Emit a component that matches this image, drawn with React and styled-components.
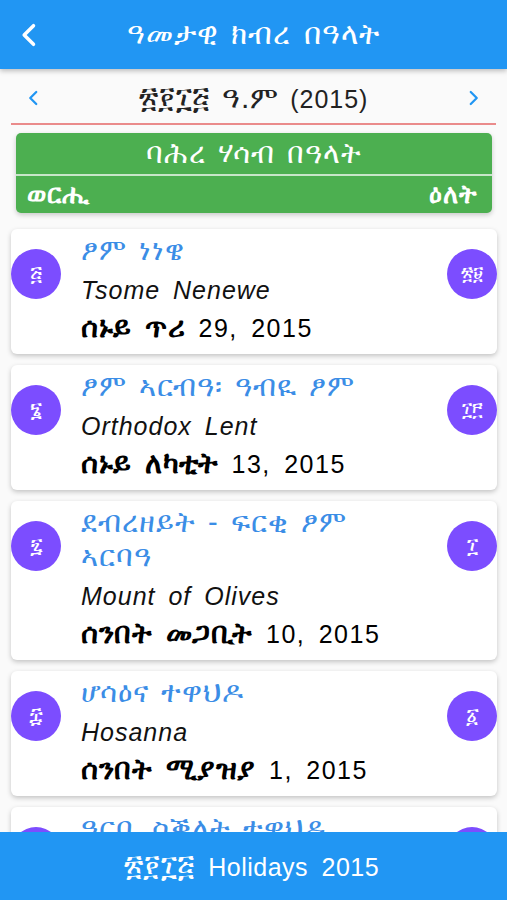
import styled, { createGlobalStyle } from "styled-components";

const GlobalStyle = createGlobalStyle`
  html, body {
    margin: 0;
    padding: 0;
    background: #fafafa;
    font-family: "Liberation Sans", "Noto Sans", "DejaVu Sans", sans-serif;
  }
`;

const Page = styled.div`
  height: 900px;
  display: flex;
  flex-direction: column;
  overflow: hidden;
  background: #fafafa;
`;

const Header = styled.header`
  flex: 0 0 69px;
  background: #2196f3;
  display: flex;
  align-items: center;
  position: relative;
  z-index: 2;
  box-shadow: 0 2px 5px rgba(0, 0, 0, 0.25);
`;

const BackButton = styled.button`
  border: none;
  background: none;
  padding: 0 0 0 16px;
  width: 60px;
  height: 100%;
  display: flex;
  align-items: center;
`;

const Title = styled.h1`
  flex: 1;
  margin: 0 60px 0 0;
  text-align: center;
  color: #fff;
  font-size: 30px;
  font-weight: normal;
  letter-spacing: 1px;
  word-spacing: 3px;
`;

const YearRow = styled.div`
  display: flex;
  align-items: center;
  justify-content: space-between;
  height: 50px;
  margin: 4px 11px 0;
  padding: 0 14px;
  border-bottom: 2px solid #ea8b8b;
`;

const Arrow = styled.span`
  display: flex;
  align-items: center;
`;

const YearText = styled.span`
  font-size: 25px;
  color: #222;
  letter-spacing: 1px;
  word-spacing: 4px;
`;

/* Ethiopic glyphs come out small in the fallback font, so they get their own size */
const Geez = styled.span`
  font-size: ${(p) => p.$size || 30}px;
  letter-spacing: 0.5px;
  line-height: 1;
`;

const Body = styled.div`
  flex: 1;
  overflow: hidden;
  padding: 8px 10px 0 11px;
`;

const GreenCard = styled.div`
  margin: 0 5px 16px;
  background: #4caf50;
  border-radius: 5px;
  box-shadow: 0 2px 5px rgba(0, 0, 0, 0.2);
  color: #fff;
`;

const GreenTitle = styled.div`
  height: 41px;
  display: flex;
  align-items: center;
  justify-content: center;
  font-size: 29px;
  letter-spacing: 1px;
  word-spacing: 3px;
  border-bottom: 2px solid #c8e6c9;
`;

const GreenRow = styled.div`
  height: 37px;
  display: flex;
  align-items: center;
  justify-content: space-between;
  padding: 0 14px 0 11px;
  font-size: 26px;
  font-weight: bold;
  letter-spacing: 1px;
`;

const List = styled.div`
  display: flex;
  flex-direction: column;
  gap: 11px;
`;

const Card = styled.div`
  background: #fff;
  border-radius: 6px;
  box-shadow: 0 2px 5px rgba(0, 0, 0, 0.22);
  display: grid;
  grid-template-columns: 50px 1fr 50px;
  column-gap: 20px;
  padding: 4px 0 7px;
`;

const Circle = styled.div`
  width: 50px;
  height: 50px;
  margin-top: 16px;
  border-radius: 50%;
  background: #7c4dff;
  color: #fff;
  display: flex;
  align-items: center;
  justify-content: center;
  font-size: ${(p) => (p.$small ? 19 : 21)}px;
  align-self: start;
`;

const Info = styled.div`
  display: flex;
  flex-direction: column;
  min-width: 0;
`;

const EventName = styled.div`
  color: #3b8de6;
  font-size: 29px;
  line-height: 34px;
  letter-spacing: 1px;
  word-spacing: 3px;
  margin-bottom: 4px;
  padding-right: 10px;
`;

const English = styled.div`
  font-style: italic;
  font-size: 25px;
  line-height: 38px;
  color: #111;
  letter-spacing: 1px;
  word-spacing: 5px;
`;

const DateLine = styled.div`
  height: 38px;
  font-size: 25px;
  line-height: 38px;
  color: #000;
  letter-spacing: 1.5px;
  word-spacing: 5px;
`;

const DateWord = styled.b`
  font-weight: bold;
  font-size: 29px;
  line-height: 1;
  letter-spacing: 0.5px;
`;

const Footer = styled.footer`
  flex: 0 0 68px;
  background: #2196f3;
  color: #fff;
  display: flex;
  align-items: center;
  justify-content: center;
  position: relative;
  z-index: 2;
`;

const FooterText = styled.span`
  font-size: 25px;
  letter-spacing: 0.5px;
  word-spacing: 6px;
  margin-left: -4px;
`;

const Chevron = ({ dir, size, color, width }) => (
  <svg width={size} height={size} viewBox="0 0 24 24" fill="none">
    <path
      d={dir === "left" ? "M15 4 L7 12 L15 20" : "M9 4 L17 12 L9 20"}
      stroke={color}
      strokeWidth={width}
      strokeLinecap="round"
      strokeLinejoin="round"
    />
  </svg>
);

const holidays = [
  {
    month: "፭",
    day: "፳፱",
    name: "ፆም ነነዌ",
    english: "Tsome Nenewe",
    date: "ሰኑይ ጥሪ",
    num: "29, 2015",
  },
  {
    month: "፮",
    day: "፲፫",
    name: "ፆም ኣርብዓ፡ ዓብዪ ፆም",
    english: "Orthodox Lent",
    date: "ሰኑይ ለካቲት",
    num: "13, 2015",
  },
  {
    month: "፯",
    day: "፲",
    name: "ደብረዘይት - ፍርቂ ፆም ኣርባዓ",
    english: "Mount of Olives",
    date: "ሰንበት መጋቢት",
    num: "10, 2015",
  },
  {
    month: "፰",
    day: "፩",
    name: "ሆሳዕና ተዋህዶ",
    english: "Hosanna",
    date: "ሰንበት ሚያዝያ",
    num: "1, 2015",
  },
  {
    month: "፰",
    day: "፮",
    name: "ዓርቢ ስቕለት ተዋህዶ",
    english: "Good Friday",
    date: "ዓርቢ ሚያዝያ",
    num: "6, 2015",
  },
];

export default function App() {
  return (
    <>
      <GlobalStyle />
      <Page>
        <Header>
          <BackButton aria-label="back">
            <Chevron dir="left" size={28} color="#fff" width={3} />
          </BackButton>
          <Title>ዓመታዊ ክብረ በዓላት</Title>
        </Header>
        <YearRow>
          <Arrow>
            <Chevron dir="left" size={18} color="#2196f3" width={3} />
          </Arrow>
          <YearText>
            <Geez $size={30}>፳፻፲፭ ዓ.ም</Geez> (2015)
          </YearText>
          <Arrow>
            <Chevron dir="right" size={18} color="#2196f3" width={3} />
          </Arrow>
        </YearRow>
        <Body>
          <GreenCard>
            <GreenTitle>ባሕረ ሃሳብ በዓላት</GreenTitle>
            <GreenRow>
              <span>ወርሒ</span>
              <span>ዕለት</span>
            </GreenRow>
          </GreenCard>
          <List>
            {holidays.map((h, i) => (
              <Card key={i}>
                <Circle>{h.month}</Circle>
                <Info>
                  <EventName>{h.name}</EventName>
                  <English>{h.english}</English>
                  <DateLine>
                    <DateWord>{h.date}</DateWord> {h.num}
                  </DateLine>
                </Info>
                <Circle $small={h.day.length > 1}>{h.day}</Circle>
              </Card>
            ))}
          </List>
        </Body>
        <Footer>
          <FooterText>
            <Geez $size={30}>፳፻፲፭</Geez> Holidays 2015
          </FooterText>
        </Footer>
      </Page>
    </>
  );
}
